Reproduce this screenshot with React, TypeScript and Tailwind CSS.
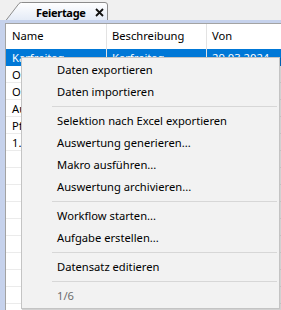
const rows = [
  { name: "Karfreitag", desc: "Karfreitag", von: "29.03.2024" },
  { name: "Ostersonntag", desc: "Ostersonntag", von: "31.03.2024" },
  { name: "Ostermontag", desc: "Ostermontag", von: "01.04.2024" },
  { name: "Auffahrt", desc: "Auffahrt", von: "09.05.2024" },
  { name: "Pfingstmontag", desc: "Pfingstmontag", von: "20.05.2024" },
  { name: "1. August", desc: "Nationalfeiertag", von: "01.08.2024" },
];

type MenuEntry = { label: string; disabled?: boolean } | "sep";

const menu: MenuEntry[] = [
  { label: "Daten exportieren" },
  { label: "Daten importieren" },
  "sep",
  { label: "Selektion nach Excel exportieren" },
  { label: "Auswertung generieren..." },
  { label: "Makro ausführen..." },
  { label: "Auswertung archivieren..." },
  "sep",
  { label: "Workflow starten..." },
  { label: "Aufgabe erstellen..." },
  "sep",
  { label: "Datensatz editieren" },
  "sep",
  { label: "1/6", disabled: true },
];

function Tab() {
  return (
    <div className="relative h-[20px] w-[110px] shrink-0">
      <svg className="absolute left-0 top-0" width="110" height="21" viewBox="0 0 110 21">
        <defs>
          <linearGradient id="tabfill" x1="0" y1="0" x2="0" y2="1">
            <stop offset="0" stopColor="#ffffff" />
            <stop offset="1" stopColor="#e3eaf6" />
          </linearGradient>
        </defs>
        <path
          d="M5.5 21 L19 3.5 Q20 2.5 21.5 2.5 L105 2.5 Q107.5 2.5 107.5 5 L107.5 21"
          fill="url(#tabfill)"
          stroke="#8c8c8c"
        />
      </svg>
      <div className="relative flex items-center h-[20px] pt-[4px] pl-[36px]">
        <span className="w-[59px] font-bold text-[11px] tracking-[-0.3px] text-black leading-none whitespace-nowrap">
          Feiertage
        </span>
        <svg className="shrink-0" width="9" height="9" viewBox="0 0 9 9">
          <path d="M1 1 L8 8 M8 1 L1 8" stroke="#111" strokeWidth="1.8" />
        </svg>
      </div>
    </div>
  );
}

function Grid() {
  return (
    <div className="flex-1 bg-white border-l border-t border-[#a3a3a3]">
      <div className="flex h-[25px] items-center">
        <div className="w-[101px] h-full flex items-center pl-[6px] border-r border-[#e3e3e3]">Name</div>
        <div className="w-[100px] h-full flex items-center pl-[5px] border-r border-[#e3e3e3]">Beschreibung</div>
        <div className="flex-1 h-full flex items-center pl-[5px]">Von</div>
      </div>
      {rows.map((r, i) => (
        <div
          key={i}
          className={
            i === 0
              ? "flex h-[17px] items-center bg-[#0078d7] text-white border-b border-[#0078d7]"
              : "flex h-[17px] items-center border-b border-[#ebebeb]"
          }
        >
          <div className="w-[101px] pl-[6px] whitespace-nowrap overflow-hidden border-r border-[#e3e3e3] h-full leading-[17px]">
            {r.name}
          </div>
          <div className="w-[100px] pl-[5px] whitespace-nowrap overflow-hidden border-r border-[#e3e3e3] h-full leading-[17px]">
            {r.desc}
          </div>
          <div className="flex-1 pl-[5px] whitespace-nowrap h-full leading-[17px]">{r.von}</div>
        </div>
      ))}
      {Array.from({ length: 9 }).map((_, i) => (
        <div key={i} className="h-[17px] border-b border-[#ebebeb]" />
      ))}
    </div>
  );
}

function ContextMenu() {
  return (
    <div className="absolute left-[21px] top-[57px] w-[259px] h-[252px] bg-[#f2f2f2] border border-[#c4c4c4] py-[1px] text-[11.2px] shadow-[1px_1px_1px_rgba(0,0,0,0.18)]">
      {menu.map((m, i) =>
        m === "sep" ? (
          <div key={i} className="h-[7px] flex items-center pl-[30px] pr-[2px]">
            <div className="h-px w-full bg-[#d7d7d7]" />
          </div>
        ) : (
          <div
            key={i}
            className={
              m.disabled
                ? "h-[22px] flex items-center pl-[35px] text-[#6d6d6d]"
                : "h-[22px] flex items-center pl-[35px] text-black"
            }
          >
            {m.label}
          </div>
        )
      )}
    </div>
  );
}

export default function App() {
  return (
    <div className="relative w-[281px] h-[310px] overflow-hidden bg-[#f0f0f0] text-[11.2px] text-black font-['Segoe_UI','Noto_Sans',sans-serif]">
      <div className="h-[21px] flex border-b border-[#9d9d9d]">
        <Tab />
      </div>
      <div className="h-[3px] bg-[#c6d2ec] -mt-px relative" />
      <div className="flex h-[290px]">
        <div className="w-[5px] bg-[#c6d2ec]" />
        <Grid />
      </div>
      <ContextMenu />
    </div>
  );
}
